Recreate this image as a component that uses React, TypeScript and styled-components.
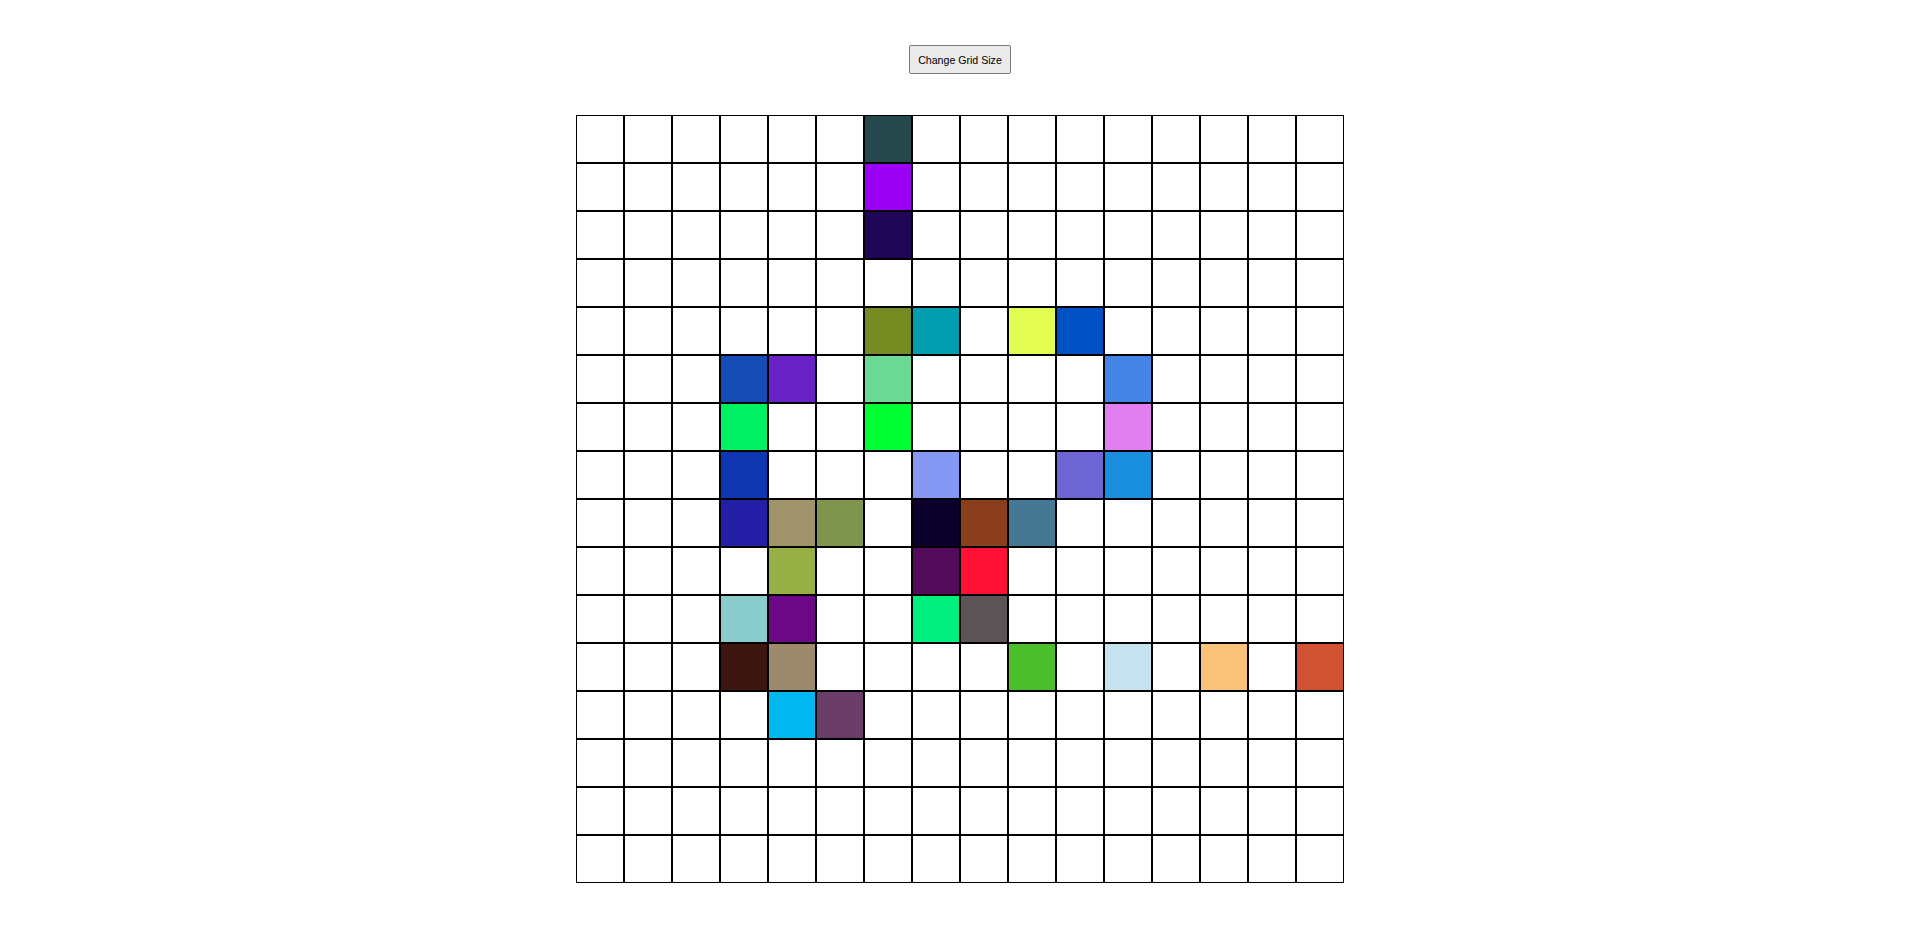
import React from 'react'
import styled, { createGlobalStyle } from 'styled-components'

const GRID_SIZE = 16

// painted cells, keyed by "row-col"
const PAINTED: Record<string, string> = {
  '0-6': '#24484b',
  '1-6': '#9b00f2',
  '2-6': '#1f0657',
  '4-6': '#758a20',
  '4-7': '#029eb0',
  '4-9': '#e2fc52',
  '4-10': '#0052c4',
  '5-3': '#144bb5',
  '5-4': '#6922c6',
  '5-6': '#6ad993',
  '5-11': '#4384e6',
  '6-3': '#00f064',
  '6-6': '#00ff33',
  '6-11': '#e27ff0',
  '7-3': '#0f35b0',
  '7-7': '#8497f2',
  '7-10': '#6e65d4',
  '7-11': '#1a8fe0',
  '8-3': '#251fa8',
  '8-4': '#a0936b',
  '8-5': '#7f944e',
  '8-7': '#0b002b',
  '8-8': '#8a3e1b',
  '8-9': '#467893',
  '9-4': '#96b046',
  '9-7': '#520b5a',
  '9-8': '#ff1035',
  '10-3': '#8acccc',
  '10-4': '#6d0886',
  '10-7': '#00f07f',
  '10-8': '#5c5356',
  '11-3': '#3e1610',
  '11-4': '#9d896b',
  '11-9': '#4cbe2b',
  '11-11': '#c4e3ee',
  '11-13': '#fac379',
  '11-15': '#d15133',
  '12-4': '#00b7f0',
  '12-5': '#6a3d69',
}

interface CellProps {
  readonly $color?: string
}

const App: React.FC = () => {
  const cells = []
  for (let r = 0; r < GRID_SIZE; r++) {
    for (let c = 0; c < GRID_SIZE; c++) {
      cells.push(<Cell key={`${r}-${c}`} $color={PAINTED[`${r}-${c}`]} />)
    }
  }

  return (
    <>
      <GlobalStyle />
      <StyledPage>
        <StyledButton type='button'>Change Grid Size</StyledButton>
        <StyledGrid>{cells}</StyledGrid>
      </StyledPage>
    </>
  )
}

const GlobalStyle = createGlobalStyle`
  body {
    margin: 8px;
    background: #ffffff;
    font-family: 'Liberation Sans', Arial, sans-serif;
  }
`

const StyledPage = styled.div`
  display: flex;
  flex-direction: column;
  align-items: center;
  gap: 41px;
  padding: 37px 0 0 3px;
`

const StyledButton = styled.button`
  height: 29px;
  padding: 0 8px;
  font-family: 'Liberation Sans', Arial, sans-serif;
  font-size: 10.6px;
  color: #000000;
  background-color: #ebebeb;
  border: 1px solid #7a7a7a;
  border-radius: 2px;
  cursor: pointer;
`

const StyledGrid = styled.div`
  display: grid;
  grid-template-columns: repeat(${GRID_SIZE}, 48px);
  grid-auto-rows: 48px;
`

const Cell = styled.div<CellProps>`
  box-sizing: border-box;
  border: 1px solid #000000;
  background-color: ${(props) => props.$color || '#ffffff'};
`

export default App
